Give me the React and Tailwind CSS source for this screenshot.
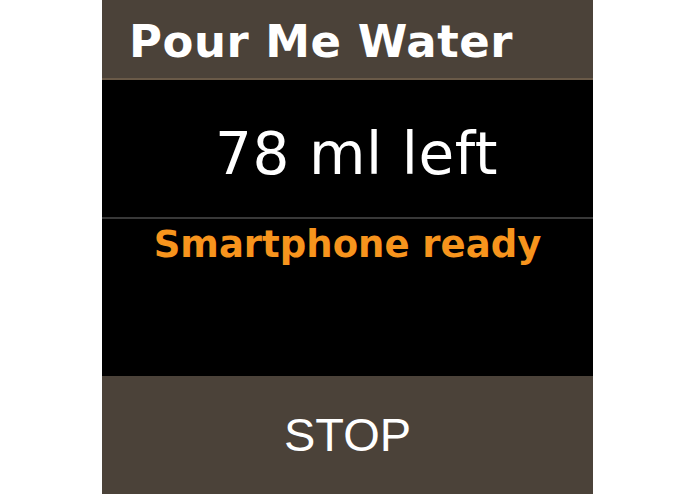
import React from 'react';

export default function App() {
  return (
    <div className="min-h-screen w-full bg-white">
      <div className="ml-[102px] flex h-[494px] w-[491px] flex-col bg-black">
        <header className="h-[80px] border-b-2 border-[#6a5a48] bg-[#4b4239] pl-[27px] pt-[19px]">
          <h1 className="text-[45px] font-bold leading-none tracking-[0.5px] text-white [font-family:'DejaVu_Sans',Verdana,sans-serif]">
            Pour Me Water
          </h1>
        </header>

        <div className="h-[137px] pl-[18px] pt-[45px] text-center">
          <p className="text-[58px] leading-none tracking-[0.6px] text-white [font-family:'DejaVu_Sans',Verdana,sans-serif]">
            78 ml left
          </p>
        </div>

        <div className="h-[2px] bg-[#383838]" />

        <div className="flex-1 pt-[7px] text-center">
          <p className="text-[37px] font-bold leading-none text-[#f7941d] [font-family:'DejaVu_Sans',Verdana,sans-serif]">
            Smartphone ready
          </p>
        </div>

        <div className="h-[118px] bg-[#4b4239] pt-[35px] text-center">
          <span className="block text-[47px] leading-none text-white [font-family:'Liberation_Sans',Arial,sans-serif]">
            STOP
          </span>
        </div>
      </div>
    </div>
  );
}
